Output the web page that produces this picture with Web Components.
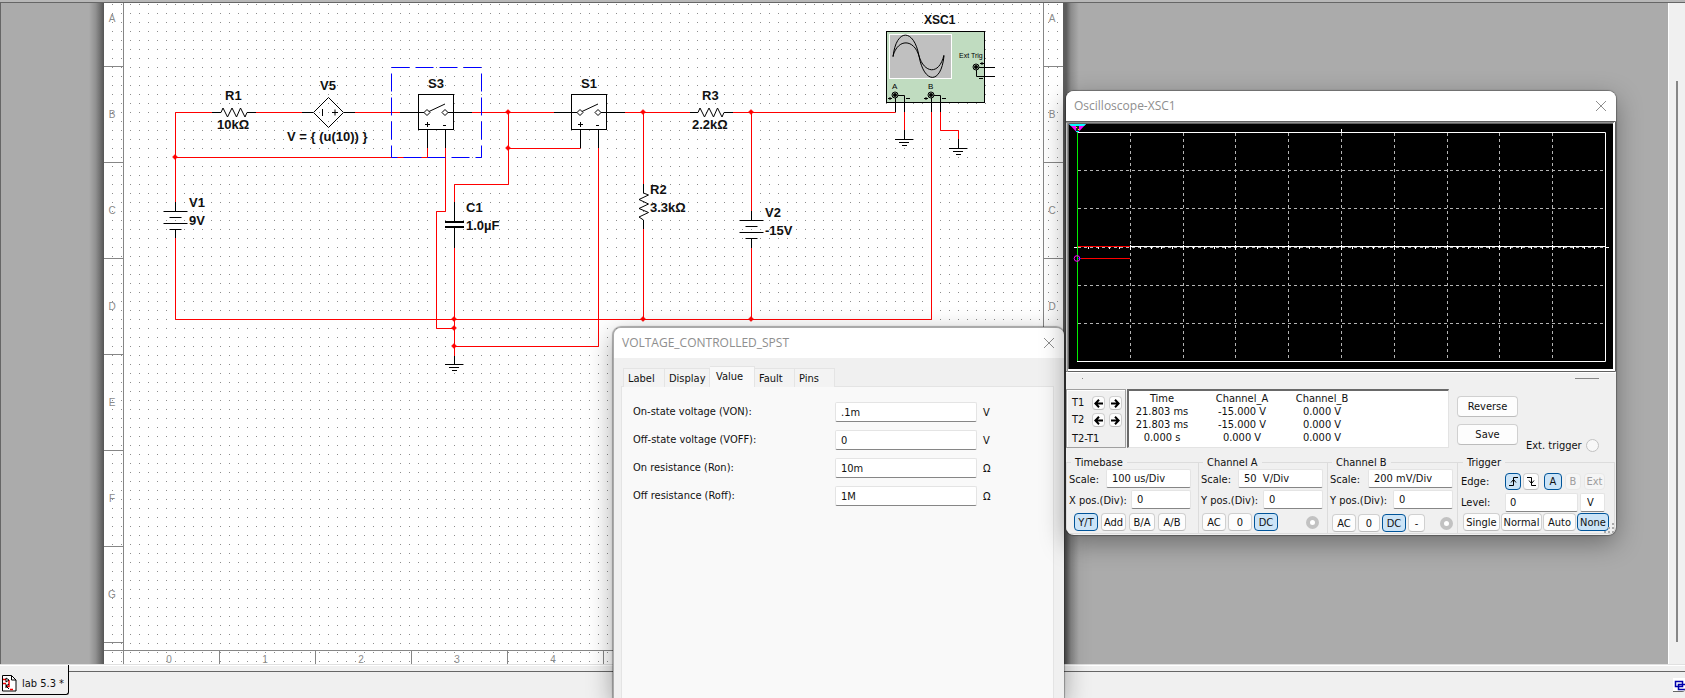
<!DOCTYPE html>
<html lang="en">
<head>
<meta charset="utf-8">
<title>lab 5.3</title>
<style>
  html, body { margin: 0; height: 100%; }
  body {
    --ui: "DejaVu Sans Condensed", "Noto Sans", sans-serif;
    --title: "Open Sans", "Noto Sans", sans-serif;
    font: 11px/13px var(--ui);
    color: #111;
    overflow: hidden;
  }
</style>
</head>
<body>
<design-app>
  <schematic-sheet slot="sheet"></schematic-sheet>
  <app-window slot="window" class="dialog" heading="VOLTAGE_CONTROLLED_SPST">
    <switch-properties></switch-properties>
  </app-window>
  <app-window slot="window" class="scope" heading="Oscilloscope-XSC1">
    <scope-screen></scope-screen>
    <scope-panel></scope-panel>
  </app-window>
  <document-tabs slot="tabs"></document-tabs>
</design-app>

<script>
const define = (name, html, setup) => {
  const template = document.createElement('template');
  template.innerHTML = html;
  customElements.define(name, class extends HTMLElement {
    connectedCallback() {
      if (this.shadowRoot) return;
      const root = this.attachShadow({ mode: 'open' });
      root.append(template.content.cloneNode(true));
      if (setup) setup(this, root);
    }
  });
};

/* ---------- application frame ---------- */
define('design-app', `
  <style>
    :host { display: flex; flex-direction: column; height: 100vh; position: relative; overflow: hidden; background: #f0f0f0; }
    .work { flex: 1; min-height: 0; display: flex; border-top: 1px solid #666; box-shadow: 0 -2px #b8b8b8; margin-top: 2px; }
    .canvas { flex: 1; min-width: 0; background: #ababab; border-left: 1px solid #666; border-right: 1px solid #fff; }
    .scroll { width: 16px; display: flex; justify-content: center; background: #f0f0f0; }
    .thumb { width: 2px; margin: 78px 0 22px; background: #868686; }
    footer { box-sizing: border-box; height: 34px; border-top: 1px solid #e0e0e0; box-shadow: inset 0 1px #fff; }
    ::slotted([slot=window]) { position: absolute; }
    ::slotted(.dialog) { left: 613px; top: 327px; bottom: 0; width: 451px; }
    ::slotted(.scope) { left: 1066px; top: 91px; width: 550px; }
  </style>
  <div class="work">
    <div class="canvas"><slot name="sheet"></slot></div>
    <div class="scroll"><div class="thumb"></div></div>
  </div>
  <footer><slot name="tabs"></slot></footer>
  <slot name="window"></slot>
`);

/* ---------- document tab strip ---------- */
define('document-tabs', `
  <style>
    :host { display: flex; height: 100%; }
    button { font: inherit; color: #111; box-sizing: border-box; display: flex; align-items: center; gap: 5px; width: 69px; height: 30px; margin: 0; padding: 7px 0 0 2px; border: 0; border-right: 1px solid #000; border-bottom: 1px solid #000; border-bottom-right-radius: 3px; background: none; white-space: pre; }
    .rest { flex: 1; margin-top: 6px; border-top: 1px solid #666; display: flex; justify-content: flex-end; align-items: flex-start; }
    .stack { display: block; margin-top: 6px; width: 12px; height: 14px; padding: 0; background: #fff; border-width: 0 0 1px; border-color: #666; overflow: hidden; }
    svg { display: block; flex: none; }
  </style>
  <button type="button"><svg width="15" height="17" viewBox="0 0 15 17">
    <path d="M.5.5h9l4.500 4.500v11H.5z" fill="#fff" stroke="#000"/><path d="M9.500.5v4.500H14" fill="none" stroke="#000"/>
    <path d="M1 4.500h3M1 8.500h3M7 5v6.500H4M11 14.500H8" stroke="#e00" fill="none" stroke-width="1.500"/>
    <path d="M4 3v4l3-2zM4 9v4M4 11l3-2M4 11l3 3" stroke="#000" fill="none"/></svg><span>lab 5.3 *</span></button>
  <div class="rest"><button class="stack" type="button" aria-label="Windows"><svg width="12" height="13" viewBox="0 0 12 13">
    <path d="M2.500 3.500h7v5h-7zM5.500 6.500h8v5h-8z" fill="#fff" stroke="#00a" stroke-width="1.500"/></svg></button></div>
`);

/* ---------- schematic ---------- */
const zig = (x, y) => `M${x} ${y}l2-4.500 4.500 9 4.500-9 4.500 9 4-9 4.500 9 2-4.500`;
const zigV = (x, y) => `M${x} ${y}l5 2-9.500 4.500 9.500 4.500-9.500 4.500 9.500 4-9.500 4.500 4.500 3`;
const battery = (x, y) => `M${x - 12} ${y}h24M${x - 6} ${y + 6}h12M${x - 12} ${y + 12}h24M${x - 6} ${y + 18}h12`;
const ground = (x, y) => `M${x - 9} ${y}h18M${x - 5} ${y + 3}h10M${x - 2} ${y + 6}h5`;
const dot = (x, y) => `<path d="M${x - 2.5} ${y}l2.500-2.500 2.500 2.500-2.500 2.500z" fill="red" stroke="red" stroke-width=".5"/>`;
const jack = (x, y) => `<circle cx="${x}" cy="${y}" r="3" fill="#c0dcc0" stroke="#000"/><circle cx="${x}" cy="${y}" r="2" fill="#000"/>`;
const spst = (l, r, a, b) => `
  <rect x="${l}" y="94.500" width="${r - l}" height="35" fill="#fff" stroke="#000"/>
  <g fill="#fff" stroke="#000"><path d="M${l} 112.500H${a - 2}M${b + 2} 112.500H${r}M${a + 2} 111.500L${b} 104"/>
  <path d="M${a - 3} 112.500l3-3 3 3-3 3zM${b - 3} 112.500l3-3 3 3-3 3z"/></g>
  <path d="M${a - 2} 124.500h5M${a + .5} 122v5M${b - 2} 125.500h3" stroke="#000"/>`;
const rows = 'ABCDEFG', rulerY = [66.5, 162.5, 258.5, 354.5, 450.5, 546.5, 642.5];
define('schematic-sheet', `
  <style>
    :host { display: flex; height: 100%; }
    .edge { width: 15px; margin-left: 88px; background: linear-gradient(90deg, #ababab, #909090 45%, #555); flex: none; }
    .paper { flex: 0 0 959px; background: #fff; }
    .right { width: 16px; background: linear-gradient(90deg, #5c5c5c 20%, #8c8c8c 50%, #ababab); flex: none; }
    svg { display: block; overflow: visible; }
    text { font-family: "Liberation Sans", Arial, sans-serif; }
    .name { font-size: 13px; font-weight: bold; fill: #111; }
    .rule { font-size: 10px; fill: #8a8a8a; text-anchor: middle; }
    .tiny { font-size: 8px; fill: #000; }
  </style>
  <div class="edge"></div>
  <div class="paper"><svg width="959" height="661" viewBox="104 3 959 661" fill="none" stroke-width="1">
    <defs><pattern id="grid" x="103" y="4" width="9" height="9" patternUnits="userSpaceOnUse"><rect width="1" height="1" fill="#8c8c8c"/></pattern></defs>
    <rect x="104" y="3" width="959" height="661" fill="url(#grid)"/>
    <path stroke="#868686" d="M123.500 3V664M104 650.500H1063M1043.500 3V650${rulerY.map(y => `M104 ${y}h20M1043 ${y}h20`).join('')}${[219.5, 315.5, 411.5, 507.5, 603.5].map(x => `M${x} 650V664`).join('')}"/>
    ${[...rows].map((c, i) => `<text class="rule" x="112" y="${22 + 96 * i}">${c}</text><text class="rule" x="1052" y="${22 + 96 * i}">${c}</text>`).join('')}
    ${[0, 1, 2, 3, 4].map(n => `<text class="rule" x="${169 + 96 * n}" y="663">${n}</text>`).join('')}
    <path stroke="red" d="M212 112.500H175.500V202M175.500 238V319.500H931.500V112M256 112.500H302M355 112.500H400M175.500 157.500H427.500V148M445.500 148V211.500H436.500V328.500H454
      M472 112.500H554M508.500 112.500V184.500H454.500V202M508.500 148.500H580.500M454.500 248V356M625 112.500H690M598.500 148V346.500H454M733 112.500H895.500
      M643.500 112.500V184M643.500 229V319M751.500 112.500V211M751.500 248V319M904.500 112V130M940.500 112V130.500H958.500V139"/>
    <rect x="391.500" y="67.500" width="90" height="90" stroke="#00f" stroke-dasharray="18 6"/>
    <path stroke="#000" d="M212 112.500H221M247 112.500H256M302 112.500H313M344 112.500H355M400 112.500H418M454 112.500H472M427.500 130V148M445.500 130V148
      M175.500 202V211M175.500 230V238M454.500 202V222M454.500 227V248M454.500 356V364M554 112.500H571M607 112.500H625M580.500 130V148M598.500 130V148
      M690 112.500H698M724 112.500H733M643.500 184V193M643.500 220V229M751.500 211V220M751.500 239V248M904.500 130V139M958.500 139V148
      ${battery(175.5, 211.5)}${battery(751.5, 220.5)}${ground(454, 364.5)}${ground(904, 139.5)}${ground(958, 148.5)}"/>
    <path stroke="#000" d="${zig(221, 112.5)}${zig(698, 112.5)}${zigV(643.5, 193)}"/>
    <path stroke="#000" stroke-width="2" d="M445 222H464M445 227H464"/>
    <path stroke="#000" d="M313.500 112.500l15-15 15 15-15 15zM322.500 109v7M332 112.500h6M335 109.500v6"/>
    ${spst(418.5, 453.5, 427, 445)}${spst(571.5, 606.5, 580, 598)}
    ${[[175, 157], [508, 112], [508, 148], [454, 319], [454, 328], [454, 346], [643, 112], [643, 319], [751, 112], [751, 319]].map(p => dot(...p)).join('')}
    <rect x="886.500" y="31.500" width="98" height="71" fill="#c0dcc0" stroke="#000"/>
    <rect x="889.500" y="34.500" width="62" height="44" fill="#c0c0c0" stroke="#fff"/>
    <path stroke="#000" d="M893 57C896 28 914 28 919 56S941 85 944 56M893 56C898 38 914 39 919 56S939 76 944 55"/>
    <path stroke="#000" d="M895.500 95V112M895 95.500H904.500V112M931.500 95V112M931 95.500H940.500V112M976 67.500H995M976.500 67V76.500H995M888 98.500h4M890 97v3M906 98.500h4M924 98.500h4M926 97v3M942 98.500h4M980 63.500h4M982 62v3M979 78.500h4"/>
    ${jack(895, 95)}${jack(931, 95)}${jack(976, 67)}
    <text class="tiny" x="892" y="89">A</text><text class="tiny" x="928" y="89">B</text><text class="tiny" x="959" y="58" style="font-size:7px">Ext Trig</text>
    <g class="name">
      <text x="225" y="100">R1</text><text x="217" y="129">10kΩ</text><text x="320" y="90">V5</text><text x="287" y="141">V = { (u(10)) }</text>
      <text x="428" y="88">S3</text><text x="189" y="207">V1</text><text x="189" y="225">9V</text><text x="466" y="212">C1</text><text x="466" y="230">1.0µF</text>
      <text x="581" y="88">S1</text><text x="702" y="100">R3</text><text x="692" y="129">2.2kΩ</text><text x="650" y="194">R2</text><text x="650" y="212">3.3kΩ</text>
      <text x="765" y="217">V2</text><text x="765" y="235">-15V</text><text x="924" y="24" style="font-size:12px">XSC1</text>
    </g>
  </svg></div>
  <div class="right"></div>
`);

/* ---------- floating window ---------- */
define('app-window', `
  <style>
    :host { display: flex; flex-direction: column; box-sizing: border-box; background: #f0f0f0; border-radius: 8px; overflow: hidden; box-shadow: 0 0 1px 1px rgba(0,0,0,.3), 0 8px 26px rgba(0,0,0,.36); }
    :host(.dialog) { border: 1px solid #aaa; border-width: 1px 0 0 1px; border-radius: 8px 8px 0 0; }
    header { display: flex; align-items: center; justify-content: space-between; height: 30px; padding: 0 8px; background: #fff; color: #8e8e8e; font: 12px/16px var(--title); }
    h2 { font: inherit; margin: 0; }
    button { border: 0; background: none; padding: 0; width: 14px; height: 14px; display: grid; place-items: center; color: #8e8e8e; }
  </style>
  <header><h2></h2><button type="button" aria-label="Close"><svg width="12" height="12" viewBox="0 0 12 12" stroke="currentColor"><path d="M1 1l10 10M11 1L1 11"/></svg></button></header>
  <slot></slot>
`, (host, root) => { root.querySelector('h2').textContent = host.getAttribute('heading'); });

/* ---------- SPST properties dialog ---------- */
define('property-field', `
  <style>
    :host { display: grid; grid-template-columns: 202px 142px 1fr; align-items: center; height: 20px; }
    label { padding-bottom: 2px; }
    input { font: inherit; color: inherit; box-sizing: border-box; width: 100%; height: 20px; padding: 0 5px; border: 1px solid #e4e4e4; border-bottom-color: #868686; border-radius: 2px; background: #fff; outline: 0; }
    span { padding-left: 6px; }
  </style>
  <label for="v"></label><input id="v"><span></span>
`, (host, root) => {
  root.querySelector('label').textContent = host.getAttribute('label');
  root.querySelector('input').value = host.getAttribute('value');
  root.querySelector('span').textContent = host.getAttribute('unit');
});
define('switch-properties', `
  <style>
    :host { display: flex; flex-direction: column; flex: 1; min-height: 0; padding: 8px 10px 0 7px; }
    nav { display: flex; align-items: flex-end; padding-left: 2px; height: 21px; margin-bottom: -1px; position: relative; }
    button { font: inherit; color: inherit; text-align: left; box-sizing: border-box; height: 19px; margin: 0; padding: 0 0 0 4px; border: 1px solid #e4e4e4; border-left-width: 0; border-bottom: 0; background: #f3f3f3; flex: 0 0 40px; }
    button:first-child { border-left-width: 1px; flex-basis: 42px; }
    button:nth-child(2) { flex-basis: 45px; }
    .on { height: 21px; flex-basis: 45px; background: #f9f9f9; padding: 0 0 2px 6px; }
    section { flex: 1; border: 1px solid #e4e4e4; border-bottom: 0; background: #f9f9f9; padding: 15px 11px; display: flex; flex-direction: column; gap: 8px; }
  </style>
  <nav><button type="button">Label</button><button type="button">Display</button><button type="button" class="on">Value</button><button type="button">Fault</button><button type="button">Pins</button></nav>
  <section>
    <property-field label="On-state voltage (VON):" value=".1m" unit="V"></property-field>
    <property-field label="Off-state voltage (VOFF):" value="0" unit="V"></property-field>
    <property-field label="On resistance (Ron):" value="10m" unit="Ω"></property-field>
    <property-field label="Off resistance (Roff):" value="1M" unit="Ω"></property-field>
  </section>
`);

/* ---------- oscilloscope screen ---------- */
const cols = [1130.5, 1183.5, 1235.5, 1288.5, 1341.5, 1394.5, 1447.5, 1499.5, 1552.5];
const ticks = Array.from({ length: 50 }, (_, i) => Math.round(1077 + i * 10.56) + .5);
define('scope-screen', `
  <style>:host { display: block; height: 252px; background: #f0f0f0; } svg { display: block; width: 100%; height: 252px; }</style>
  <svg viewBox="1066 121 550 252" fill="none">
    <rect x="1066" y="121" width="550" height="252" fill="#fff"/>
    <path d="M1066 121.500H1615.500V371.500H1066" stroke="#606060"/>
    <path d="M1066 372V122.500H1614M1067.500 372V122.500" stroke="#909090"/>
    <rect x="1069" y="124" width="544" height="245" fill="#000"/><path d="M1068.500 369V123.500H1613" stroke="#606060"/>
    <path stroke="#b4b4b4" stroke-dasharray="3 3" d="${cols.map(x => `M${x} 133V361`).join('')}${[170.5, 208.5, 247.5, 285.5, 323.5].map(y => `M1078 ${y}H1605`).join('')}"/>
    <path stroke="#fff" d="M1077 132.500H1605.500V361.500H1077M1341.500 129V133M1074 247.500h4M1606 247.500h3M1130 246.500H1606${ticks.map(x => `M${x} 247v2`).join('')}${cols.map(x => `M${x} 245v5`).join('')}"/>
    <path stroke="#0e0" d="M1077.500 132V361"/>
    <path stroke="red" d="M1078 246.500H1130M1081 258.500H1130"/>
    <path stroke="#00f" d="M1078 258.500h3"/><circle cx="1077" cy="258.500" r="2.800" stroke="#f0f"/>
    <path d="M1069 124H1086L1078 132.500H1077z" fill="#f0f"/><path d="M1069 124H1086L1084 126H1071z" fill="#0ff"/>
    <path d="M1076 126h3v5h-3z" fill="#222"/><path d="M1076.500 127v1M1078.500 129v1" stroke="#ff0"/><path d="M1076 131.500h3" stroke="#0ff"/>
  </svg>
`);

/* ---------- oscilloscope controls ---------- */
define('scope-field', `
  <style>
    :host { display: flex; align-items: center; justify-content: space-between; height: 19px; }
    input { font: inherit; color: inherit; box-sizing: border-box; width: var(--w, 85px); height: 19px; padding: 0 5px 1px; border: 1px solid #e4e4e4; border-bottom-color: #868686; border-radius: 2px; background: #fff; outline: 0; }
    label { white-space: nowrap; padding-top: 2px; }
  </style>
  <label for="v"></label><input id="v">
`, (host, root) => {
  root.querySelector('label').textContent = host.getAttribute('label');
  root.querySelector('input').value = host.getAttribute('value');
});
define('tool-button', `
  <style>
    :host { display: block; flex: none; width: var(--w, 24px); height: var(--h, 18px); }
    button { font: inherit; color: inherit; box-sizing: border-box; width: 100%; height: 100%; padding: 0; margin: 0; border: 1px solid #d0d0d0; border-bottom-color: #bcbcbc; border-radius: 4px; background: #fdfdfd; display: flex; align-items: center; justify-content: center; white-space: nowrap; }
    :host([on]) button { background: #cce4f7; border-color: #005499; }
    :host([off]) button { background: #f5f5f5; border-color: #e8e8e8; color: #9d9d9d; }
  </style>
  <button type="button"><slot></slot></button>
`);
const arrow = d => `<svg width="9" height="9" viewBox="0 0 9 9"><path d="${d}" fill="none" stroke="#000" stroke-width="2"/></svg>`;
const left = arrow('M9 4.500H2M5 .8L1.300 4.500 5 8.200'), right = arrow('M0 4.500H7M4 .8L7.700 4.500 4 8.200');
define('scope-panel', `
  <style>
    :host { display: block; }
    .strip { display: flex; justify-content: space-between; height: 11px; padding: 5px 17px 0 16px; }
    .strip i { width: 24px; height: 1px; background: #868686; } .strip i:first-child { width: 1px; }
    .readout { display: flex; height: 59px; }
    .cursors { box-sizing: border-box; width: 60px; border: 1px solid #a0a0a0; box-shadow: inset 1px 1px #fff; padding: 6px 3px 0 5px; display: grid; grid-template-columns: 1fr 13px 13px; column-gap: 4px; grid-template-rows: 17px 17px 14px; align-items: start; --w: 13px; --h: 14px; }
    .cursors span:last-child { grid-column: 1 / 4; padding-top: 2px; }
    table { box-sizing: border-box; width: 322px; margin-left: 1px; background: #fff; border: 1px solid #e3e3e3; border-top: 2px solid #696969; border-left: 2px solid #696969; border-collapse: separate; border-spacing: 0; padding: 1px 93px 3px 0; table-layout: fixed; }
    td, th { width: 66px; font-weight: normal; padding: 0; text-align: center; height: 13px; line-height: 13px; white-space: nowrap; }
    th:nth-child(2) { width: 94px; }
    .acts { display: grid; grid-template-rows: 21px 21px; gap: 7px; margin: 7px 0 0 8px; --w: 61px; --h: 21px; }
    .ext { display: flex; align-items: center; gap: 4px; align-self: flex-end; margin-left: 8px; margin-bottom: -4px; }
    input[type=radio] { appearance: none; box-sizing: border-box; flex: none; width: 13px; height: 13px; margin: 0; border: 1px solid #c2c2c2; border-radius: 50%; background: #f8f8f8; }
    input[type=radio]:checked { border: 4px solid #c2c2c2; background: #fff; }
    .groups { display: grid; grid-template-columns: 132px 129px 130px 1fr; margin-top: 8px; padding-bottom: 1px; }
    fieldset { margin: 0; min-width: 0; border: 1px solid #dcdcdc; border-right: 0; padding: 0 4px 0 2px; display: flex; flex-direction: column; gap: 2px; height: 78px; box-sizing: border-box; }
    .timebase { padding-right: 7px; }
    .timebase .row { padding-left: 5px; gap: 3px; }
    .trigger { border-right: 1px solid #dcdcdc; margin-right: 1px; padding: 2px 5px 0 3px; gap: 1px; }
    legend { padding: 0 4px; margin-left: 2px; line-height: 13px; }
    .pos { --w: 60px; }
    .row { display: flex; gap: 2px; align-items: center; padding: 2px 0 0 1px; }
    .row input { margin: 0 4px 0 auto; }
    .channel-b .row { padding: 3px 0 0 2px; }
    .channel-b .row input { margin-right: 0; }
    .trig { display: flex; align-items: center; height: 19px; --w: 16px; --h: 17px; gap: 2px; }
    .edges { height: 21px; }
    .trig > label, .trig > span { width: 42px; }
    .trig input { font: inherit; color: inherit; box-sizing: border-box; width: 73px; height: 19px; padding: 0 4px; border: 1px solid #e4e4e4; border-bottom-color: #868686; background: #fff; border-radius: 2px; }
    .trig input + input { width: 25px; padding: 0 6px; }
    .source { display: flex; gap: 3px; margin-left: 3px; }
    .modes { display: flex; justify-content: space-between; padding-left: 2px; }
    .grip { position: absolute; right: 2px; bottom: 2px; }
  </style>
  <div class="strip"><i></i><i></i></div>
  <div class="readout">
    <div class="cursors">
      <span>T1</span><tool-button>${left}</tool-button><tool-button>${right}</tool-button>
      <span>T2</span><tool-button>${left}</tool-button><tool-button>${right}</tool-button>
      <span>T2-T1</span>
    </div>
    <table>
      <tr><th>Time</th><th>Channel_A</th><th>Channel_B</th></tr>
      <tr><td>21.803 ms</td><td>-15.000 V</td><td>0.000 V</td></tr>
      <tr><td>21.803 ms</td><td>-15.000 V</td><td>0.000 V</td></tr>
      <tr><td>0.000 s</td><td>0.000 V</td><td>0.000 V</td></tr>
    </table>
    <div class="acts"><tool-button>Reverse</tool-button><tool-button>Save</tool-button></div>
    <div class="ext"><label for="ext">Ext. trigger</label><input type="radio" id="ext"></div>
  </div>
  <div class="groups">
    <fieldset class="timebase"><legend>Timebase</legend>
      <scope-field label="Scale:" value="100 us/Div"></scope-field>
      <scope-field class="pos" label="X pos.(Div):" value="0"></scope-field>
      <div class="row"><tool-button on>Y/T</tool-button><tool-button style="--w:25px">Add</tool-button><tool-button style="--w:26px">B/A</tool-button><tool-button style="--w:28px">A/B</tool-button></div>
    </fieldset>
    <fieldset><legend>Channel A</legend>
      <scope-field label="Scale:" value="50  V/Div"></scope-field>
      <scope-field class="pos" label="Y pos.(Div):" value="0"></scope-field>
      <div class="row"><tool-button>AC</tool-button><tool-button>0</tool-button><tool-button on>DC</tool-button><input type="radio" checked aria-label="Channel A input"></div>
    </fieldset>
    <fieldset class="channel-b"><legend>Channel B</legend>
      <scope-field label="Scale:" value="200 mV/Div"></scope-field>
      <scope-field class="pos" label="Y pos.(Div):" value="0"></scope-field>
      <div class="row"><tool-button>AC</tool-button><tool-button style="--w:22px">0</tool-button><tool-button on>DC</tool-button><tool-button style="--w:17px">-</tool-button><input type="radio" checked aria-label="Channel B input"></div>
    </fieldset>
    <fieldset class="trigger"><legend>Trigger</legend>
      <div class="trig edges"><span>Edge:</span>
        <tool-button on><svg width="11" height="11" viewBox="0 0 11 11" fill="none" stroke="#000"><path d="M1 9.500h4.500v-8H10M3 6.500l2.500-3 2.500 3"/></svg></tool-button>
        <tool-button><svg width="11" height="11" viewBox="0 0 11 11" fill="none" stroke="#000"><path d="M1 1.500h4.500v8H10M3 4.500l2.500 3 2.500-3"/></svg></tool-button>
        <div class="source"><tool-button on style="--w:18px">A</tool-button><tool-button off>B</tool-button><tool-button off style="--w:21px">Ext</tool-button></div></div>
      <div class="trig"><label for="lvl">Level:</label><input id="lvl" value="0"><input aria-label="Level unit" value="V"></div>
      <div class="modes"><tool-button style="--w:37px">Single</tool-button><tool-button style="--w:41px">Normal</tool-button><tool-button style="--w:33px">Auto</tool-button><tool-button on style="--w:32px">None</tool-button></div>
    </fieldset>
  </div>
  <svg class="grip" width="10" height="10" viewBox="0 0 10 10" fill="#aaa"><path d="M8 0h2v2H8zM8 4h2v2H8zM4 4h2v2H4zM8 8h2v2H8zM4 8h2v2H4zM0 8h2v2H0z"/></svg>
`);
</script>
</body>
</html>
